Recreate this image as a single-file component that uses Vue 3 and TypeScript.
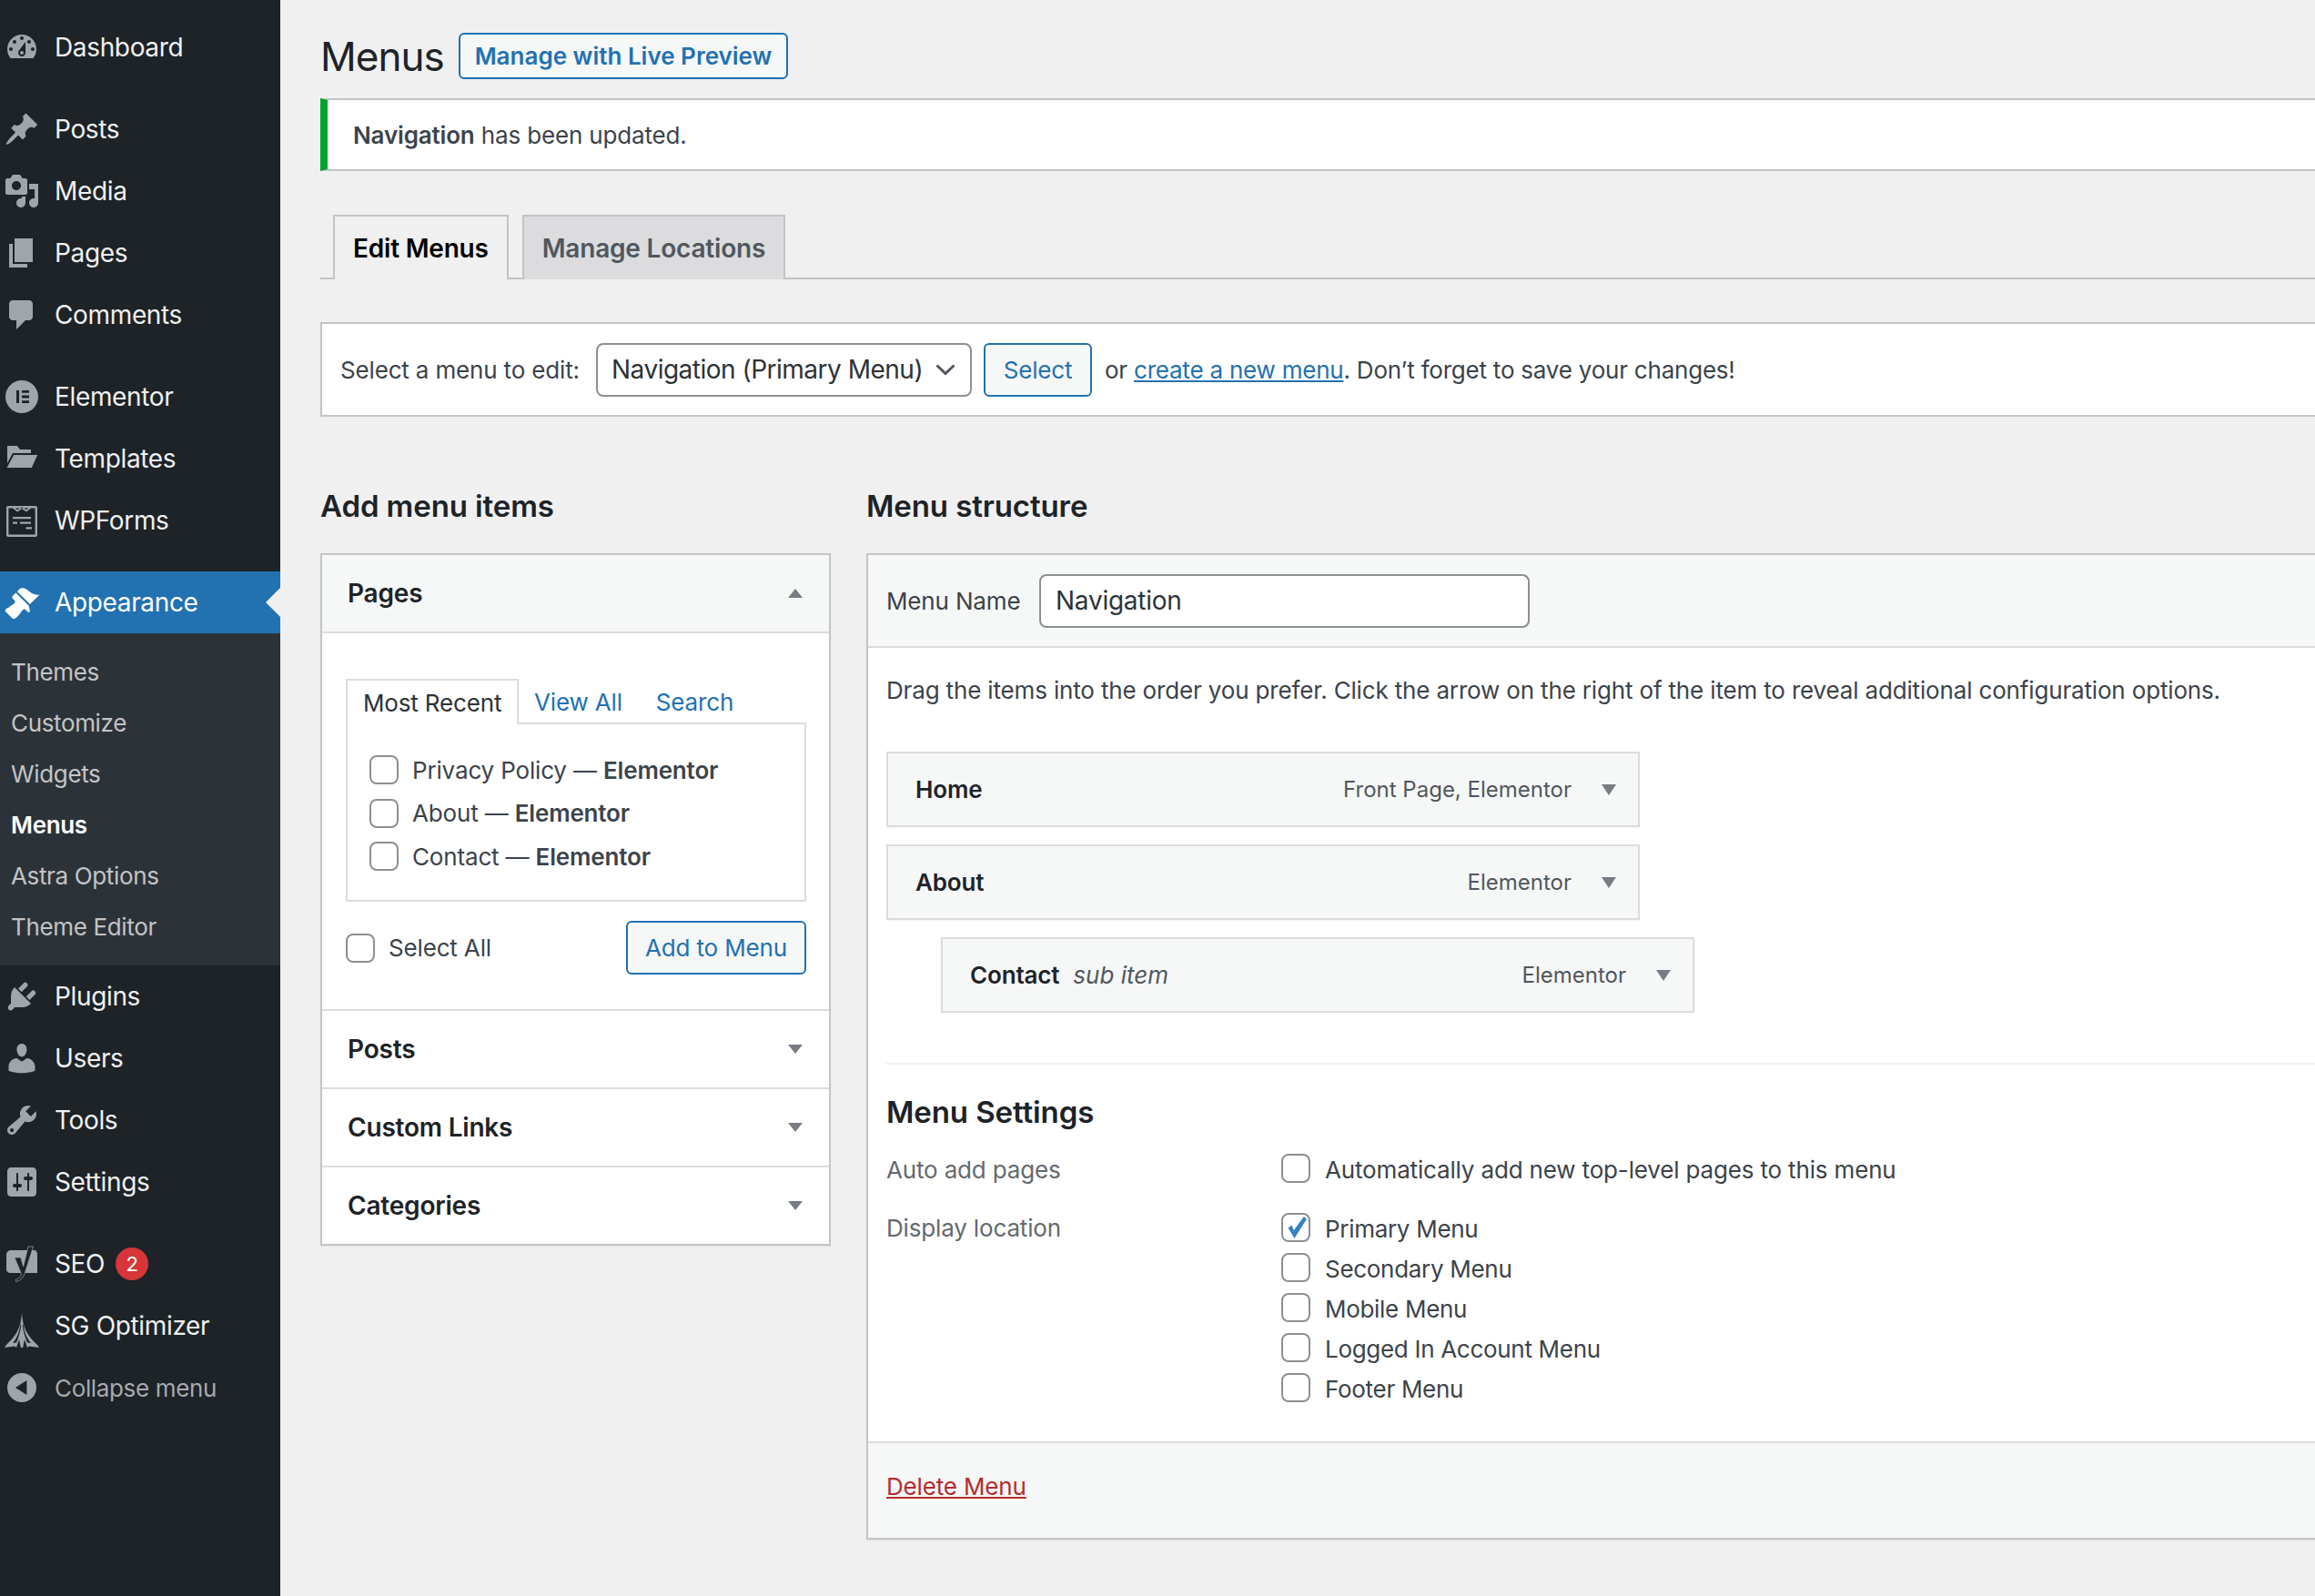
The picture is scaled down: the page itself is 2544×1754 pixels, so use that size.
<template>
  <div class="page">
    <aside class="sidebar">
      <template v-for="(group, g) in menuGroups" :key="g">
        <div class="group">
          <div v-for="item in group" :key="item.label" :class="['menu-item', { current: item.label === 'Appearance', muted: item.label === 'Collapse menu' }]">
            <svg class="menu-icon" viewBox="0 0 20 20">
              <path :d="icons[item.icon]" fill-rule="evenodd" />
              <path v-if="item.icon === 'seo'" class="yoast-y" d="M6 6.500h3.400l1.400 5 2.700-11h2.800l-4.800 15c-.7 2.200-2.200 3.600-4.600 4.300l-.3-1.100c1.600-.5 2.700-1.400 3.200-3.100z" />
            </svg>
            <span>{{ item.label }}</span>
            <span v-if="item.badge" class="badge">{{ item.badge }}</span>
          </div>
        </div>
        <div v-if="g === 3" class="submenu">
          <div v-for="sub in submenu" :key="sub" :class="['sub-item', { current: sub === 'Menus' }]">{{ sub }}</div>
        </div>
      </template>
    </aside>

    <main class="main">
      <div class="title-row">
        <h1>Menus</h1>
        <a class="title-action">Manage with Live Preview</a>
      </div>

      <div class="notice"><p><strong>Navigation</strong> has been updated.</p></div>

      <nav class="nav-tabs">
        <a class="nav-tab active">Edit Menus</a>
        <a class="nav-tab">Manage Locations</a>
      </nav>

      <div class="manage-menus">
        <span class="manage-label">Select a menu to edit:</span>
        <div class="fake-select">
          <span>Navigation (Primary Menu)</span>
          <svg class="chevron" viewBox="0 0 22 12"><path d="M1.5 1.5 11 10.5l9.5-9" /></svg>
        </div>
        <button class="btn small-btn">Select</button>
        <span class="manage-text">or <a class="link underlined">create a new menu</a>. Don’t forget to save your changes!</span>
      </div>

      <div class="columns">
        <section class="left-col">
          <h2>Add menu items</h2>
          <div class="accordion">
            <div class="acc-head open">
              <h3>Pages</h3>
              <i class="arrow up"></i>
            </div>
            <div class="acc-body">
              <div class="mini-tabs">
                <span class="mini-tab active">Most Recent</span>
                <a class="mini-tab link">View All</a>
                <a class="mini-tab link">Search</a>
              </div>
              <div class="tab-box">
                <label v-for="page in recentPages" :key="page" class="check-row">
                  <input type="checkbox" />
                  <span>{{ page }} — <strong>Elementor</strong></span>
                </label>
              </div>
              <div class="add-row">
                <label class="check-row">
                  <input type="checkbox" />
                  <span>Select All</span>
                </label>
                <button class="btn add-btn">Add to Menu</button>
              </div>
            </div>
            <div v-for="name in ['Posts', 'Custom Links', 'Categories']" :key="name" class="acc-head">
              <h3>{{ name }}</h3>
              <i class="arrow"></i>
            </div>
          </div>
        </section>

        <section class="right-col">
          <h2>Menu structure</h2>
          <div class="menu-edit">
            <div class="edit-head">
              <label>Menu Name</label>
              <div class="name-input">Navigation</div>
            </div>
            <div class="edit-body">
              <p class="drag-text">Drag the items into the order you prefer. Click the arrow on the right of the item to reveal additional configuration options.</p>
              <div class="items">
                <div v-for="item in menuItems" :key="item.title" :class="['nav-item', { sub: item.sub }]">
                  <strong>{{ item.title }}</strong>
                  <em v-if="item.sub">sub item</em>
                  <span class="item-type">{{ item.type }}</span>
                  <i class="item-arrow"></i>
                </div>
              </div>
              <div class="settings">
                <h3>Menu Settings</h3>
                <div class="settings-grid">
                  <span class="setting-label">Auto add pages</span>
                  <div class="setting-value">
                    <label class="setting-check"><input type="checkbox" /><span>Automatically add new top-level pages to this menu</span></label>
                  </div>
                  <span class="setting-label display">Display location</span>
                  <div class="setting-value">
                    <label v-for="loc in locations" :key="loc" class="setting-check loc">
                      <input type="checkbox" :checked="loc === 'Primary Menu'" />
                      <span>{{ loc }}</span>
                    </label>
                  </div>
                </div>
              </div>
            </div>
            <div class="edit-foot"><a class="delete">Delete Menu</a></div>
          </div>
        </section>
      </div>
    </main>
  </div>
</template>

<script setup lang="ts">
type MenuEntry = { label: string; icon: string; badge?: string }

const icons: Record<string, string> = {
  dashboard:
    'M3.76 16h12.48c1.1-1.37 1.76-3.11 1.76-5 0-4.42-3.58-8-8-8s-8 3.58-8 8c0 1.89.66 3.63 1.76 5zM10 4c.55 0 1 .45 1 1s-.45 1-1 1-1-.45-1-1 .45-1 1-1zM6 6c.55 0 1 .45 1 1s-.45 1-1 1-1-.45-1-1 .45-1 1-1zm8 0c.55 0 1 .45 1 1s-.45 1-1 1-1-.45-1-1 .45-1 1-1zm-5.37 5.55L12 7v6c0 1.1-.9 2-2 2s-2-.9-2-2c0-.57.24-1.08.63-1.45zM4 10c.55 0 1 .45 1 1s-.45 1-1 1-1-.45-1-1 .45-1 1-1zm12 0c.55 0 1 .45 1 1s-.45 1-1 1-1-.45-1-1 .45-1 1-1zm-5 3c0-.55-.45-1-1-1s-1 .45-1 1 .45 1 1 1 1-.45 1-1z',
  post: 'M10.44 3.02l1.82-1.82 6.36 6.35-1.83 1.82c-1.05-.68-2.48-.57-3.41.36l-.75.75c-.92.93-1.04 2.35-.35 3.41l-1.83 1.82-2.41-2.41-2.8 2.79c-.42.42-3.38 2.71-3.8 2.29s1.86-3.39 2.28-3.81l2.79-2.79L4.1 9.36l1.83-1.82c1.05.69 2.48.57 3.4-.36l.75-.75c.93-.92 1.05-2.35.36-3.41z',
  media:
    'M13 11V4c0-.55-.45-1-1-1h-1.67L9 1H5L3.67 3H2c-.55 0-1 .45-1 1v7c0 .55.45 1 1 1h10c.55 0 1-.45 1-1zM7 4.5c1.38 0 2.5 1.12 2.5 2.5S8.38 9.5 7 9.5 4.5 8.38 4.5 7 5.62 4.5 7 4.5zM14 6h5v10.5c0 1.38-1.12 2.5-2.5 2.5S14 17.88 14 16.5s1.12-2.5 2.5-2.5c.17 0 .34.02.5.05V9h-3V6zm-4 8.05V13h2v3.5c0 1.38-1.12 2.5-2.5 2.5S7 17.88 7 16.5 8.12 14 9.5 14c.17 0 .34.02.5.05z',
  page: 'M6 15V2h10v13H6zm-1 1h8v2H3V5h2v11z',
  comments: 'M5 2h9c1.1 0 2 .9 2 2v7c0 1.1-.9 2-2 2h-2l-5 5v-5H5c-1.1 0-2-.9-2-2V4c0-1.1.9-2 2-2z',
  elementor:
    'M10 1c5 0 9 4 9 9s-4 9-9 9-9-4-9-9 4-9 9-9zM7 6.5v7h1.5v-7zM10 6.5v1.4h4V6.5zM10 9.3v1.4h4V9.3zM10 12.1v1.4h4v-1.4z',
  templates: 'M2 3h5.5L9 5h6v2H5L2 12.5zM5.6 8h13L15.4 15H1.8z',
  forms:
    'M2.5 2h15c.6 0 1 .4 1 1v15c0 .6-.4 1-1 1h-15c-.6 0-1-.4-1-1V3c0-.6.4-1 1-1zM2.7 3.2v14.6h14.6V3.2zM5 3.2l2.5 2L10 3.6l2.5 1.6 2.5-2h-1.4l-1.1.9L10 2.6 7.500 4.100 6.400 3.200zM5 8h10v1.100H5zM5 10.800h2.500v1.100H5zM9 10.800h6v1.100H9zM12.200 13.600h3.300v1.100h-3.300z',
  appearance:
    'M14.48 11.06L7.41 3.99l1.5-1.5c.5-.56 2.3-.47 3.51.32 1.21.8 1.43 1.28 2.91 2.1 1.18.64 2.45 1.26 4.45.85zm-.71.71L6.7 4.7 4.93 6.47c-.39.39-.39 1.02 0 1.41l1.06 1.06c.39.39.39 1.03 0 1.42-.6.6-1.43 1.11-2.21 1.69-.35.26-.7.53-1.01.84C1.43 13.23.4 14.4 1.1 15.1l3.8 3.8c.7.7 1.87-.33 3.2-1.67.31-.31.58-.66.84-1.01.58-.78 1.09-1.61 1.69-2.21.39-.39 1.03-.39 1.42 0l1.06 1.06c.39.39 1.02.39 1.41 0z',
  plugins:
    'M13.11 4.36L9.87 7.6 8 5.73l3.24-3.24c.35-.34 1.05-.2 1.56.32.52.51.66 1.21.31 1.55zm-8 1.77l.91-1.12 9.01 9.01-1.19.84c-.71.71-2.63 1.16-3.82 1.16H6.14L4.9 17.26c-.59.59-1.54.59-2.12 0-.59-.58-.59-1.53 0-2.12l1.24-1.24v-3.88c0-1.13.4-3.19 1.09-3.89zm7.26 3.97l3.24-3.24c.34-.35 1.04-.21 1.55.31.52.51.66 1.21.31 1.55l-3.24 3.25z',
  users:
    'M10 9.25c-2.27 0-2.73-3.44-2.73-3.44C7 4.02 7.82 2 9.97 2c2.16 0 2.98 2.02 2.71 3.81 0 0-.41 3.44-2.68 3.44zm0 2.57L12.72 10c2.39 0 4.52 2.33 4.52 4.53v2.49s-3.65 1.13-7.24 1.13c-3.65 0-7.24-1.13-7.24-1.13v-2.49c0-2.25 1.94-4.48 4.47-4.48z',
  tools:
    'M16.68 9.77c-1.34 1.34-3.3 1.67-4.95.99l-5.41 6.52c-.99.99-2.59.99-3.58 0s-.99-2.59 0-3.57l6.52-5.42c-.68-1.65-.35-3.61.99-4.95 1.28-1.28 3.12-1.62 4.72-1.06l-2.89 2.89 2.82 2.82 2.86-2.87c.53 1.58.18 3.39-1.08 4.65zM3.81 16.21c.4.39 1.04.39 1.43 0 .4-.4.4-1.04 0-1.43-.39-.4-1.03-.4-1.43 0-.39.39-.39 1.03 0 1.43z',
  settings:
    'M18 16V4c0-1.1-.9-2-2-2H4c-1.1 0-2 .9-2 2v12c0 1.1.9 2 2 2h12c1.1 0 2-.9 2-2zM8 11h1c.55 0 1 .45 1 1s-.45 1-1 1H8v1.5c0 .28-.22.5-.5.5s-.5-.22-.5-.5V13H6c-.55 0-1-.45-1-1s.45-1 1-1h1V5.5c0-.28.22-.5.5-.5s.5.22.5.5V11zm5-2h-1c-.55 0-1-.45-1-1s.45-1 1-1h1V5.5c0-.28.22-.5.5-.5s.5.22.5.5V7h1c.55 0 1 .45 1 1s-.45 1-1 1h-1v5.5c0 .28-.22.5-.5.5s-.5-.22-.5-.5V9z',
  seo: 'M4 2.500h13.500l1 1.500V15H3.500C2.500 15 1.500 14 1.500 13V5c0-1.400 1.100-2.500 2.500-2.500z',
  sg: 'M10 2.500C10.400 9 11.500 14 18.500 20.500L19.500 22 14 21.300 13 22 11.500 17.500 10.600 22H9.400L8.500 17.500 7 22 6 21.300 .5 22 1.500 20.500C8.500 14 9.600 9 10 2.500zM9.200 9C8.800 13 7.600 16.500 5 19.500L7 19.200C8.400 16 9.200 13 9.600 10zM10.800 9C11.200 13 12.400 16.500 15 19.500L13 19.200C11.600 16 10.800 13 10.400 10z',
  collapse: 'M10 2a8 8 0 1 0 0 16 8 8 0 0 0 0-16zM12.700 6v8L6.500 10z',
}

const menuGroups: MenuEntry[][] = [
  [{ label: 'Dashboard', icon: 'dashboard' }],
  [
    { label: 'Posts', icon: 'post' },
    { label: 'Media', icon: 'media' },
    { label: 'Pages', icon: 'page' },
    { label: 'Comments', icon: 'comments' },
  ],
  [
    { label: 'Elementor', icon: 'elementor' },
    { label: 'Templates', icon: 'templates' },
    { label: 'WPForms', icon: 'forms' },
  ],
  [{ label: 'Appearance', icon: 'appearance' }],
  [
    { label: 'Plugins', icon: 'plugins' },
    { label: 'Users', icon: 'users' },
    { label: 'Tools', icon: 'tools' },
    { label: 'Settings', icon: 'settings' },
  ],
  [
    { label: 'SEO', icon: 'seo', badge: '2' },
    { label: 'SG Optimizer', icon: 'sg' },
    { label: 'Collapse menu', icon: 'collapse' },
  ],
]

const submenu = ['Themes', 'Customize', 'Widgets', 'Menus', 'Astra Options', 'Theme Editor']
const recentPages = ['Privacy Policy', 'About', 'Contact']
const menuItems = [
  { title: 'Home', type: 'Front Page, Elementor', sub: false },
  { title: 'About', type: 'Elementor', sub: false },
  { title: 'Contact', type: 'Elementor', sub: true },
]
const locations = ['Primary Menu', 'Secondary Menu', 'Mobile Menu', 'Logged In Account Menu', 'Footer Menu']
</script>

<style>
html,
body {
  margin: 0;
  height: 100%;
  overflow: hidden;
  background: #f0f0f1;
}
</style>

<style scoped>
.page {
  display: flex;
  width: 2544px;
  height: 1754px;
  overflow: hidden;
  font-family: Inter, 'Liberation Sans', sans-serif;
  font-size: 26px;
  letter-spacing: -0.16px;
  color: #3c434a;
  background: #f0f0f1;
}
* {
  box-sizing: border-box;
}
.sidebar {
  width: 308px;
  flex-shrink: 0;
  padding-top: 18px;
  background: #1d2327;
  color: #f0f0f1;
  letter-spacing: -0.35px;
}
.group {
  margin-bottom: 22px;
}
.group:nth-of-type(4),
.group:nth-of-type(5) {
  margin-bottom: 0;
}
.menu-item {
  position: relative;
  display: flex;
  align-items: center;
  height: 68px;
  padding-left: 4px;
  font-size: 28px;
}
.menu-icon {
  width: 40px;
  height: 40px;
  margin-right: 16px;
  flex-shrink: 0;
  fill: #a0a5aa;
  overflow: visible;
}
.yoast-y {
  fill: #1d2327;
  stroke: #a0a5aa;
  stroke-width: 0.35;
}
.menu-item.current {
  background: #2271b1;
  color: #fff;
}
.menu-item.current .menu-icon {
  fill: #fff;
}
.menu-item.current::after {
  content: '';
  position: absolute;
  right: 0;
  top: 18px;
  border: 16px solid transparent;
  border-left-width: 0;
  border-right-color: #f0f0f1;
}
.menu-item.muted {
  color: #a7aaad;
  font-size: 26px;
}
.badge {
  display: flex;
  align-items: center;
  justify-content: center;
  width: 36px;
  height: 36px;
  margin-left: 12px;
  border-radius: 50%;
  background: #d63638;
  color: #fff;
  font-size: 22px;
}
.submenu {
  padding: 15px 0 14px;
  background: #2c3338;
}
.sub-item {
  height: 56px;
  line-height: 56px;
  padding-left: 12px;
  font-size: 26px;
  color: #c3c4c7;
}
.sub-item.current {
  color: #fff;
  font-weight: 600;
}

.main {
  flex: 1;
  min-width: 0;
  padding: 36px 0 0 44px;
  overflow: hidden;
}
.title-row {
  display: flex;
  align-items: center;
  gap: 16px;
  height: 51px;
}
h1 {
  margin: 0;
  font-size: 44px;
  font-weight: 400;
  letter-spacing: -1px;
  color: #1d2327;
}
.title-action {
  display: flex;
  align-items: center;
  height: 51px;
  padding: 0 16px;
  border: 2px solid #2271b1;
  border-radius: 6px;
  background: #f6f7f7;
  color: #2271b1;
  font-weight: 600;
  letter-spacing: 0;
}
.notice {
  width: calc(100% + 20px);
  height: 80px;
  margin-top: 21px;
  padding-left: 28px;
  display: flex;
  align-items: center;
  border: 2px solid #c3c4c7;
  border-left: 8px solid #00a32a;
  background: #fff;
}
.notice p {
  margin: 0;
}
strong {
  font-weight: 600;
}
.nav-tabs {
  display: flex;
  gap: 15px;
  height: 71px;
  margin-top: 48px;
  padding-left: 14px;
  width: calc(100% + 20px);
  border-bottom: 2px solid #c3c4c7;
}
.nav-tab {
  display: flex;
  align-items: center;
  height: 71px;
  padding: 0 20px;
  border: 2px solid #c3c4c7;
  border-bottom: 0;
  background: #dcdcde;
  color: #50575e;
  font-size: 28px;
  font-weight: 600;
  letter-spacing: -0.2px;
}
.nav-tab.active {
  background: #f0f0f1;
  color: #000;
}
.manage-menus {
  display: flex;
  align-items: center;
  width: calc(100% + 20px);
  height: 104px;
  margin-top: 47px;
  padding-left: 20px;
  border: 2px solid #c3c4c7;
  background: #fff;
}
.manage-label {
  width: 281px;
  flex-shrink: 0;
  white-space: nowrap;
}
.fake-select {
  display: flex;
  align-items: center;
  justify-content: space-between;
  width: 413px;
  height: 59px;
  padding: 0 16px 0 15px;
  border: 2px solid #8c8f94;
  border-radius: 8px;
  font-size: 28px;
  color: #2c3338;
  white-space: nowrap;
  letter-spacing: -0.5px;
}
.chevron {
  width: 22px;
  height: 12px;
  flex-shrink: 0;
  fill: none;
  stroke: #50575e;
  stroke-width: 3;
}
.btn {
  height: 59px;
  border: 2px solid #2271b1;
  border-radius: 6px;
  background: #f6f7f7;
  color: #2271b1;
  font: inherit;
  letter-spacing: inherit;
  padding: 0;
}
.small-btn {
  width: 119px;
  margin-left: 13px;
}
.manage-text {
  margin-left: 14px;
  white-space: nowrap;
  letter-spacing: -0.22px;
}
.link {
  color: #2271b1;
}
.underlined {
  text-decoration: underline;
}
.columns {
  display: flex;
  gap: 39px;
  width: calc(100% + 20px);
}
.left-col {
  width: 561px;
  flex-shrink: 0;
}
.right-col {
  flex: 1;
  min-width: 0;
}
h2 {
  display: flex;
  align-items: center;
  height: 70px;
  margin: 63px 0 17px;
  font-size: 33px;
  font-weight: 600;
  letter-spacing: -0.1px;
  color: #1d2327;
}
.accordion {
  border: 2px solid #c3c4c7;
  background: #fff;
  box-shadow: 0 1px 1px rgba(0, 0, 0, 0.06);
}
.acc-head {
  display: flex;
  align-items: center;
  justify-content: space-between;
  height: 86px;
  padding: 0 16px 0 28px;
  border-top: 2px solid #dcdcde;
}
.acc-head:first-child {
  height: 84px;
  border-top: 0;
}
.acc-head.open {
  background: #f6f7f7;
}
h3 {
  margin: 0;
  font-size: 28px;
  font-weight: 600;
  letter-spacing: -0.2px;
  color: #1d2327;
}
.arrow {
  width: 0;
  height: 0;
  margin-right: 13px;
  border-left: 8px solid transparent;
  border-right: 8px solid transparent;
  border-top: 10px solid #787c82;
}
.arrow.up {
  border-top: 0;
  border-bottom: 10px solid #787c82;
}
.acc-body {
  padding: 50px 25px 38px 26px;
  border-top: 2px solid #dcdcde;
}
.mini-tabs {
  display: flex;
  height: 50px;
  margin-bottom: -2px;
}
.mini-tab {
  position: relative;
  display: flex;
  align-items: center;
  padding: 0 18px 0 17px;
  height: 50px;
}
.mini-tab.active {
  width: 190px;
  padding: 0 0 0 17px;
  border: 2px solid #dcdcde;
  border-bottom: 0;
  background: #fff;
  color: #2c3338;
  z-index: 1;
}
.mini-tab.link:last-child {
  padding-left: 19px;
}
.tab-box {
  display: flex;
  flex-direction: column;
  height: 197px;
  padding: 34px 24px;
  gap: 15.500px;
  border: 2px solid #dcdcde;
}
.check-row {
  display: flex;
  align-items: center;
  gap: 15px;
  height: 32px;
}
input[type='checkbox'] {
  appearance: none;
  display: block;
  width: 32px;
  height: 32px;
  margin: 0;
  flex-shrink: 0;
  border: 2px solid #8c8f94;
  border-radius: 8px;
  background: #fff;
}
input[type='checkbox']:checked::before {
  content: '';
  display: block;
  width: 26px;
  height: 26px;
  margin: 1px;
  background: #3582c4;
  clip-path: polygon(18% 52%, 32% 40%, 42% 62%, 84% 4%, 96% 14%, 44% 96%);
}
.add-row {
  display: flex;
  align-items: center;
  justify-content: space-between;
  margin-top: 21px;
}
.add-btn {
  width: 198px;
}
.menu-edit {
  border: 2px solid #c3c4c7;
  border-right: 0;
  background: #fff;
  box-shadow: 0 1px 1px rgba(0, 0, 0, 0.06);
}
.edit-head {
  display: flex;
  align-items: center;
  height: 102px;
  padding-left: 20px;
  border-bottom: 2px solid #dcdcde;
  background: #f6f7f7;
}
.edit-head label {
  width: 168px;
}
.name-input {
  display: flex;
  align-items: center;
  width: 539px;
  height: 59px;
  padding-left: 16px;
  border: 2px solid #8c8f94;
  border-radius: 8px;
  background: #fff;
  font-size: 28px;
  color: #2c3338;
  letter-spacing: -0.25px;
}
.edit-body {
  padding: 0 0 0 20px;
}
.drag-text {
  margin: 0;
  padding-top: 31px;
  line-height: 32px;
  white-space: nowrap;
}
.items {
  display: flex;
  flex-direction: column;
  gap: 19px;
  margin-top: 51px;
}
.nav-item {
  display: flex;
  align-items: center;
  width: 828px;
  height: 83px;
  padding-left: 30px;
  border: 2px solid #dcdcde;
  background: #f6f7f7;
  box-shadow: 0 1px 2px rgba(0, 0, 0, 0.05);
}
.nav-item.sub {
  margin-left: 60px;
}
.nav-item strong {
  color: #1d2327;
}
.nav-item em {
  margin-left: 15px;
  color: #50575e;
  letter-spacing: 0;
}
.item-type {
  margin-left: auto;
  font-size: 24px;
  letter-spacing: 0;
  color: #50575e;
}
.item-arrow {
  width: 0;
  height: 0;
  margin: 0 24px 0 33px;
  border-left: 8px solid transparent;
  border-right: 8px solid transparent;
  border-top: 12px solid #787c82;
}
.settings {
  margin-top: 55px;
  padding-top: 31px;
  border-top: 2px solid #f0f0f1;
}
.settings h3 {
  font-size: 33px;
  line-height: 42px;
  letter-spacing: -0.1px;
}
.settings-grid {
  display: grid;
  grid-template-columns: 434px 1fr;
  margin-top: 25px;
  padding-bottom: 43px;
}
.setting-label {
  color: #646970;
  line-height: 36px;
}
.setting-label.display {
  margin-top: 28px;
}
.setting-value {
  display: flex;
  flex-direction: column;
  gap: 12px;
}
.setting-value + .display + .setting-value {
  margin-top: 29px;
}
.setting-check {
  display: flex;
  align-items: center;
  gap: 16px;
  height: 32px;
  white-space: nowrap;
}
.setting-check span {
  position: relative;
  top: 1px;
}
.setting-check.loc {
  letter-spacing: -0.3px;
}
.edit-foot {
  display: flex;
  align-items: center;
  height: 106px;
  padding: 0 0 10px 20px;
  border-top: 2px solid #dcdcde;
  background: #f6f7f7;
}
.delete {
  color: #b32d2e;
  text-decoration: underline;
}
</style>
